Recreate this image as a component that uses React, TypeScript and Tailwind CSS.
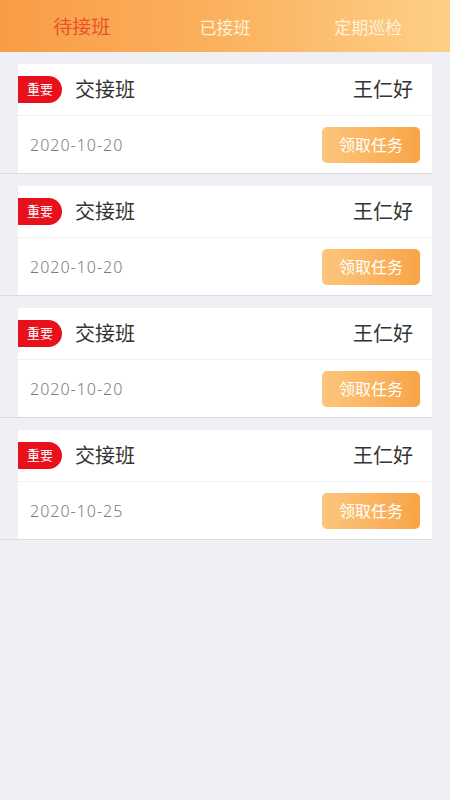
const tabs = ["待接班", "已接班", "定期巡检"];

const tasks = [
  { title: "交接班", name: "王仁好", date: "2020-10-20" },
  { title: "交接班", name: "王仁好", date: "2020-10-20" },
  { title: "交接班", name: "王仁好", date: "2020-10-20" },
  { title: "交接班", name: "王仁好", date: "2020-10-25" },
];

export default function App() {
  return (
    <div
      className="min-h-[800px] bg-[#f0f0f4]"
      style={{ fontFamily: '"Noto Sans", "Noto Sans CJK SC", sans-serif' }}
    >
      <div className="h-[52px] flex items-center px-[10px] bg-gradient-to-r from-[#f99c45] via-[#fbb25e] to-[#fdcf88]">
        {tabs.map((tab, i) => (
          <div
            key={tab}
            className={
              i === 0
                ? "flex-1 text-center text-[19px] text-[#e8522a] pt-[3px]"
                : "flex-1 text-center text-[17px] text-[#fff1da] pt-[3px]"
            }
          >
            {tab}
          </div>
        ))}
      </div>

      <div className="pt-[12px] flex flex-col gap-[12px]">
        {tasks.map((t, i) => (
          <div key={i} className="mr-[18px] border-b border-[#dcdce0]">
            <div className="ml-[18px] bg-white">
              <div className="h-[52px] flex items-center border-b border-[#f0f0f2]">
                <span className="h-[27px] w-[44px] flex items-center justify-center rounded-r-full bg-[#e8101a] text-white text-[13px]">
                  重要
                </span>
                <span className="ml-[13px] text-[20px] text-[#333333]">{t.title}</span>
                <span className="ml-auto mr-[19px] text-[20px] text-[#333333]">{t.name}</span>
              </div>
              <div className="h-[57px] flex items-center justify-between px-[12px]">
                <span className="text-[16px] font-light tracking-[1px] text-[#7c7c7c]">{t.date}</span>
                <span className="h-[36px] w-[98px] flex items-center justify-center rounded-[5px] bg-gradient-to-r from-[#fcc67c] to-[#f9a446] text-white text-[16px]">
                  领取任务
                </span>
              </div>
            </div>
          </div>
        ))}
      </div>
    </div>
  );
}
